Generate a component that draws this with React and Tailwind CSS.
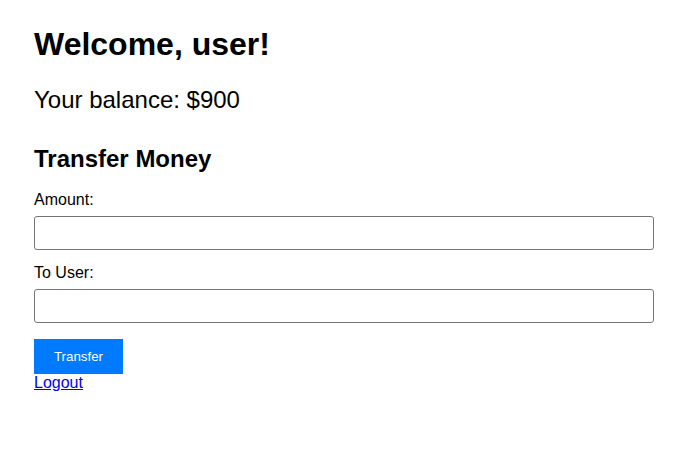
export default function App() {
  return (
    <div className="min-h-[464px] bg-white text-black px-[34px] pt-[26px]" style={{ fontFamily: '"Liberation Sans", Arial, sans-serif' }}>
      <h1 className="text-[32px] font-bold leading-[37px]">Welcome, user!</h1>
      <p className="text-[24px] leading-[28px] mt-[23px]">Your balance: $900</p>
      <h2 className="text-[24px] font-bold leading-[28px] mt-[31px]">Transfer Money</h2>
      <form className="mt-[18px]" onSubmit={(e) => e.preventDefault()}>
        <label className="block text-[16px] leading-[18px]">Amount:</label>
        <input type="text" className="block mt-[7px] w-[620px] h-[34px] border border-[#767676] rounded-[3px] px-2 text-[16px]" />
        <label className="block text-[16px] leading-[18px] mt-[14px]">To User:</label>
        <input type="text" className="block mt-[7px] w-[620px] h-[34px] border border-[#767676] rounded-[3px] px-2 text-[16px]" />
        <button type="submit" className="block mt-[16px] w-[89px] h-[35px] bg-[#007bff] text-white text-[13.33px]">Transfer</button>
      </form>
      <a href="#" className="block w-fit text-[16px] leading-[17px] text-[#0000ee] underline">Logout</a>
    </div>
  );
}
